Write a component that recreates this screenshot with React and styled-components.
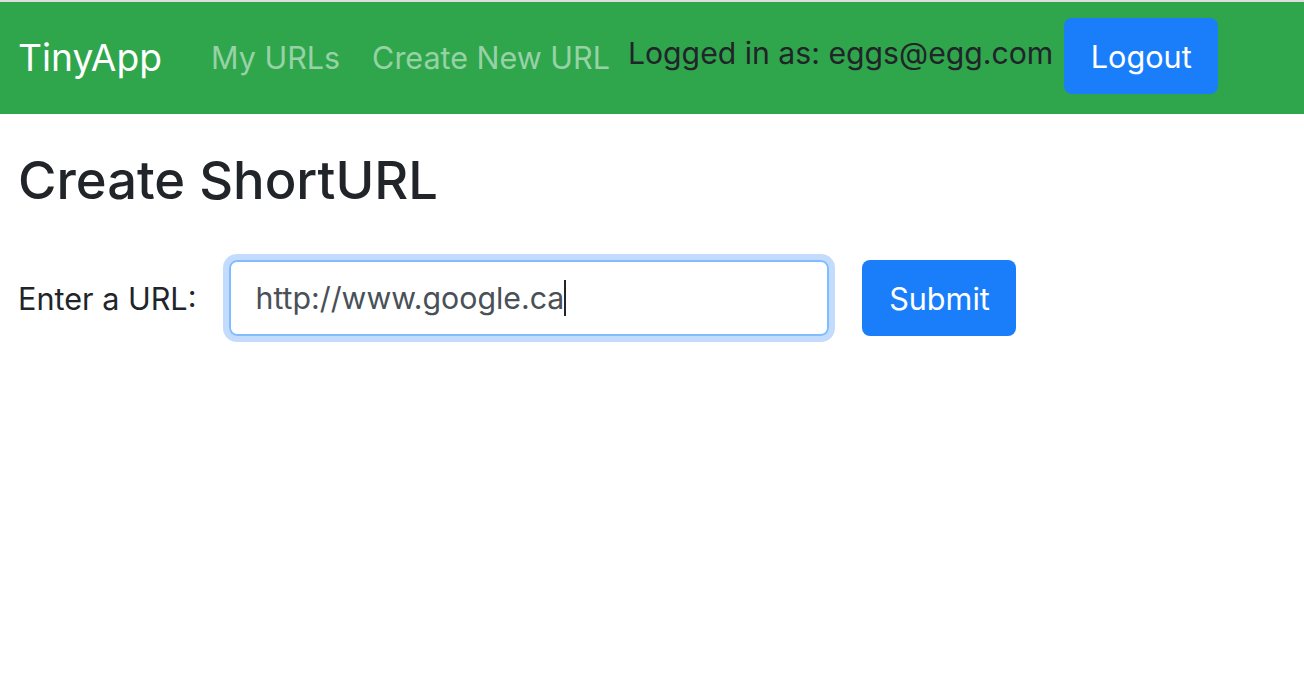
import React from 'react';
import styled, { createGlobalStyle } from 'styled-components';

const GlobalStyle = createGlobalStyle`
    body {
        margin: 0;
        background: #ffffff;
        font-family: Inter, "Noto Sans", "Liberation Sans", sans-serif;
        color: #212529;
    }
`;

const Page = styled.div`
    border-top: 2px solid #dedede;
    min-height: 684px;
`;

const Navbar = styled.nav`
    display: flex;
    align-items: center;
    height: 112px;
    box-sizing: border-box;
    padding: 0 18px 4px;
    background-color: #2fa64c;
`;

const Brand = styled.a`
    font-size: 37.2px;
    line-height: 60px;
    padding-top: 4px;
    color: #ffffff;
    text-decoration: none;
    margin-right: 33px;
`;

const NavLink = styled.a`
    font-size: 30.5px;
    line-height: 48px;
    padding: 4px 16px 0;
    color: #97d2a6;
    text-decoration: none;
`;

const UserInfo = styled.span`
    font-size: 30.2px;
    color: #212529;
    margin: 0 11px 0 2px;
    padding-bottom: 6px;
`;

const Button = styled.button`
    width: 154px;
    height: 76px;
    padding: 0;
    border: none;
    border-radius: 8px;
    background-color: #1a7efb;
    color: #ffffff;
    font-family: inherit;
    font-size: 30.6px;
`;

const Main = styled.main`
    padding: 0 18px;
`;

const Heading = styled.h2`
    margin: 35px 0 48px;
    font-size: 52.5px;
    font-weight: 500;
    line-height: 1.2;
`;

const FormRow = styled.form`
    display: flex;
    align-items: center;
`;

const Label = styled.label`
    font-size: 30.6px;
    margin-right: 33px;
`;

const Field = styled.div`
    display: flex;
    align-items: center;
    box-sizing: border-box;
    width: 600px;
    height: 76px;
    padding: 0 24px;
    border: 2px solid #80bdff;
    border-radius: 8px;
    box-shadow: 0 0 0 6px #c3dcfd;
    font-size: 30.3px;
    color: #495057;
    margin-right: 33px;
`;

const Caret = styled.span`
    display: inline-block;
    width: 2px;
    height: 36px;
    background: #212529;
`;

export default function App() {
    return (
        <Page>
            <GlobalStyle />
            <Navbar>
                <Brand href="#">TinyApp</Brand>
                <NavLink href="#">My URLs</NavLink>
                <NavLink href="#">Create New URL</NavLink>
                <UserInfo>Logged in as: eggs@egg.com</UserInfo>
                <Button type="button">Logout</Button>
            </Navbar>
            <Main>
                <Heading>Create ShortURL</Heading>
                <FormRow onSubmit={(e) => e.preventDefault()}>
                    <Label>Enter a URL:</Label>
                    <Field>
                        http://www.google.ca
                        <Caret />
                    </Field>
                    <Button type="submit">Submit</Button>
                </FormRow>
            </Main>
        </Page>
    );
}
